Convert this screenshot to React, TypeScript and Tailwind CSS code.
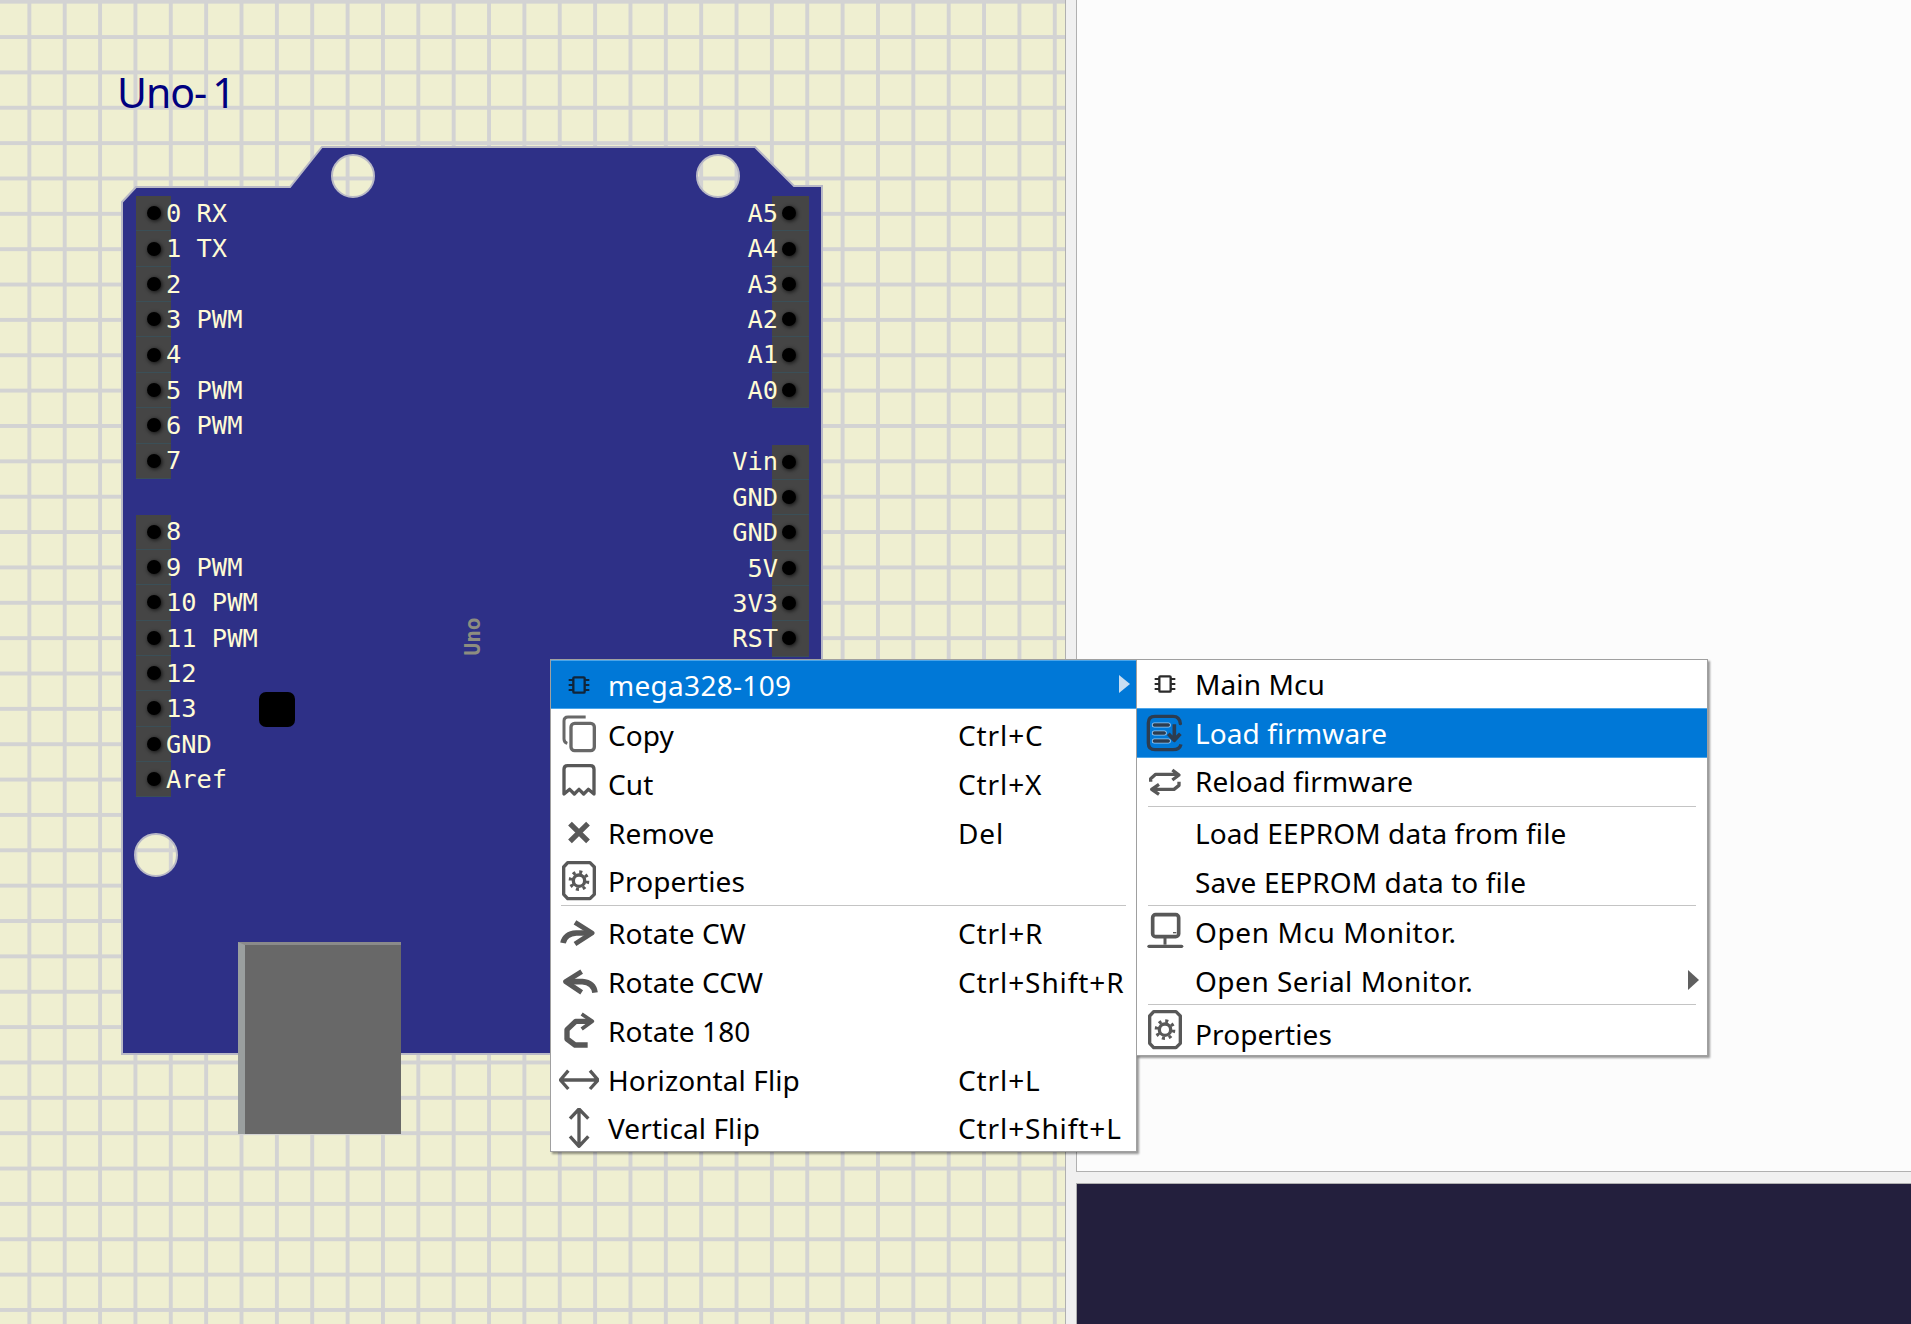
import type { ReactNode } from 'react'

const INK = '#585858'

function Glyph({ children, className = '' }: { children: ReactNode; className?: string }) {
  return (
    <svg viewBox="0 0 120 120" fill="none" strokeLinejoin="round" className={`h-[40px] w-[40px] shrink-0 ${className}`}>
      {children}
    </svg>
  )
}

function ChipIcon({ color }: { color: string }) {
  return (
    <Glyph>
      <rect x="43" y="37" width="34" height="46" rx="3" stroke={color} strokeWidth="7" />
      <path d="M29 45H43M29 60H43M29 75H43M77 45H91M77 60H91M77 75H91" stroke={color} strokeWidth="6" />
    </Glyph>
  )
}

function CopyIcon() {
  return (
    <Glyph>
      <rect x="36" y="25" width="70" height="82" rx="11" stroke="#686868" strokeWidth="10" />
      <path d="M80 6H27Q15 6 15 18V72Q15 82 25 85" stroke="#686868" strokeWidth="9" />
    </Glyph>
  )
}

function CutIcon() {
  return (
    <Glyph>
      <path d="M15 90V16Q15 5 26 5H94Q105 5 105 16V90L88 76L74 90L60 76L46 90L32 76Z" stroke={INK} strokeWidth="10" />
    </Glyph>
  )
}

function RemoveIcon() {
  return (
    <Glyph>
      <path d="M33 32L87 85M87 32L33 85" stroke={INK} strokeWidth="16" />
    </Glyph>
  )
}

function GearBoxIcon() {
  return (
    <Glyph>
      <path d="M26 5H93L106 18V100L93 113H26L14 100V18Z" stroke={INK} strokeWidth="10" />
      <circle cx="60" cy="59" r="17" stroke={INK} strokeWidth="10" />
      <circle cx="60" cy="59" r="26" stroke={INK} strokeWidth="10" strokeDasharray="9 11.4" />
    </Glyph>
  )
}

function RotateCwIcon() {
  return (
    <Glyph>
      <path d="M48 28L99 60L48 93" stroke={INK} strokeWidth="15" />
      <path d="M12 90Q18 62 52 60H94" stroke={INK} strokeWidth="17" />
    </Glyph>
  )
}

function RotateCcwIcon() {
  return (
    <Glyph>
      <path d="M68 29L20 59L68 91" stroke={INK} strokeWidth="15" />
      <path d="M108 92Q104 62 70 59H26" stroke={INK} strokeWidth="17" />
    </Glyph>
  )
}

function Rotate180Icon() {
  return (
    <Glyph>
      <path d="M68 9L100 31L68 54" stroke={INK} strokeWidth="11" />
      <path d="M95 31H50L24 56V84L48 102H86" stroke={INK} strokeWidth="16" />
    </Glyph>
  )
}

function FlipHIcon() {
  return (
    <Glyph>
      <path d="M28 32L4 60L28 87M93 32L117 60L93 87M8 60H113" stroke={INK} strokeWidth="10" />
    </Glyph>
  )
}

function FlipVIcon() {
  return (
    <Glyph>
      <path d="M33 32L60 3L88 32M33 85L60 115L88 85M60 6V112" stroke={INK} strokeWidth="10" />
    </Glyph>
  )
}

function LoadFirmwareIcon() {
  return (
    <Glyph>
      <path d="M106 30V32Q104 10 84 10H30Q10 10 10 30V90Q10 110 30 110H84Q104 110 108 94" stroke="#2c3c50" strokeWidth="10" />
      <path d="M28 36H70M28 60H58M28 84H70" stroke="#9cc8ee" strokeWidth="15" strokeLinecap="round" />
      <path d="M28 36H70M28 60H58M28 84H70" stroke="#2c3c50" strokeWidth="10" strokeLinecap="round" />
      <path d="M88 34V78M70 62L88 82L106 62" stroke="#2c3c50" strokeWidth="11" />
    </Glyph>
  )
}

function ReloadIcon() {
  return (
    <Glyph>
      <path d="M17 59V50L32 37H98M82 24L102 39L82 54" stroke={INK} strokeWidth="10" />
      <path d="M102 59V70L87 82H22M42 67L20 82L42 97" stroke={INK} strokeWidth="10" />
    </Glyph>
  )
}

function MonitorIcon() {
  return (
    <Glyph>
      <rect x="23" y="8" width="78" height="66" rx="9" stroke={INK} strokeWidth="11" />
      <path d="M84 62H94" stroke={INK} strokeWidth="4" />
      <path d="M60 75V98" stroke={INK} strokeWidth="9" />
      <path d="M12 103H110" stroke={INK} strokeWidth="10" strokeLinecap="round" />
    </Glyph>
  )
}

function Separator({ inset }: { inset: string }) {
  return <div className={`h-px shrink-0 bg-[#c4c4c4] ${inset}`} />
}

function MainMenuRow({
  icon,
  label,
  shortcut,
  className = 'h-[49px]',
}: {
  icon: ReactNode
  label: string
  shortcut?: string
  className?: string
}) {
  return (
    <div className={`flex items-center ${className}`}>
      <div className="ml-[8px] w-[49px]">{icon}</div>
      <span className="w-[350px] shrink-0">{label}</span>
      {shortcut && <span className="tracking-[0.9px]">{shortcut}</span>}
    </div>
  )
}

function SubMenuRow({
  icon,
  label,
  className = 'h-[49px]',
  labelClass = '',
  children,
}: {
  icon?: ReactNode
  label: string
  className?: string
  labelClass?: string
  children?: ReactNode
}) {
  return (
    <div className={`relative flex items-center ${className}`}>
      <div className="ml-[8px] h-[40px] w-[50px]">{icon}</div>
      <span className={`relative ${labelClass}`}>{label}</span>
      {children}
    </div>
  )
}

function ContextMenus() {
  const menuBox =
    'absolute flex flex-col border border-[#a0a0a0] bg-white text-black shadow-[2px_2px_2px_rgba(0,0,0,0.4)]'
  const active = 'border-y border-[#4aa5ea] bg-[#0078d7] text-white'

  return (
    <div className="font-['Noto_Sans',sans-serif] text-[28px] tracking-[0.1px]">
      <div className={`${menuBox} left-[550px] top-[659px] z-10 h-[493px] w-[587px]`}>
        <div className={`relative flex h-[49px] items-center ${active}`}>
          <div className="ml-[8px] w-[49px]">
            <ChipIcon color="#10253a" />
          </div>
          <span className="tracking-[0.3px]">mega328-109</span>
          <div className="absolute right-[6px] top-[14px] h-0 w-0 border-y-[9px] border-l-[11px] border-y-transparent border-l-[#c8def2]" />
        </div>
        <div className="h-px shrink-0" />
        <MainMenuRow icon={<CopyIcon />} label="Copy" shortcut="Ctrl+C" />
        <MainMenuRow icon={<CutIcon />} label="Cut" shortcut="Ctrl+X" />
        <MainMenuRow icon={<RemoveIcon />} label="Remove" shortcut="Del" />
        <MainMenuRow icon={<GearBoxIcon />} label="Properties" className="h-[48px]" />
        <Separator inset="mx-[10px]" />
        <div className="h-[2px] shrink-0" />
        <MainMenuRow icon={<RotateCwIcon />} label="Rotate CW" shortcut="Ctrl+R" />
        <MainMenuRow icon={<RotateCcwIcon />} label="Rotate CCW" shortcut="Ctrl+Shift+R" />
        <MainMenuRow icon={<Rotate180Icon />} label="Rotate 180" />
        <MainMenuRow icon={<FlipHIcon />} label="Horizontal Flip" shortcut="Ctrl+L" />
        <MainMenuRow icon={<FlipVIcon />} label="Vertical Flip" shortcut="Ctrl+Shift+L" className="h-[47px]" />
      </div>

      <div className={`${menuBox} left-[1136px] top-[659px] z-20 h-[397px] w-[572px]`}>
        <SubMenuRow icon={<ChipIcon color="#2b2b2b" />} label="Main Mcu" className="h-[48px]" />
        <SubMenuRow icon={<LoadFirmwareIcon />} label="Load firmware" className={`h-[50px] ${active}`} />
        <SubMenuRow icon={<ReloadIcon />} label="Reload firmware" labelClass="-top-px" className="h-[48px]" />
        <Separator inset="mx-[11px]" />
        <div className="h-[2px] shrink-0" />
        <SubMenuRow label="Load EEPROM data from file" labelClass="-top-px" />
        <SubMenuRow label="Save EEPROM data to file" className="h-[47px]" />
        <Separator inset="mx-[11px]" />
        <div className="h-[2px] shrink-0" />
        <SubMenuRow
          icon={<MonitorIcon />}
          label="Open Mcu Monitor."
          labelClass="tracking-[0.6px]"
          className="h-[48px]"
        />
        <SubMenuRow label="Open Serial Monitor." labelClass="top-px tracking-[0.5px]" className="h-[48px]">
          <div className="absolute right-[8px] top-[14px] h-0 w-0 border-y-[10px] border-l-[11px] border-y-transparent border-l-[#5f5f5f]" />
        </SubMenuRow>
        <Separator inset="mx-[11px]" />
        <div className="h-[2px] shrink-0" />
        <SubMenuRow
          icon={<GearBoxIcon />}
          label="Properties"
          labelClass="top-[4px]"
          className="h-[46px]"
        />
      </div>
    </div>
  )
}

function PinRow({ side, label }: { side: 'left' | 'right'; label: string }) {
  const hole = (
    <div
      className={`flex h-full shrink-0 items-center justify-center border-b border-[#3b4f57] bg-[#454545] ${
        side === 'left' ? 'w-[35px]' : 'w-[37px] pr-[3px]'
      }`}
    >
      <div className="h-[14px] w-[14px] rounded-full bg-black shadow-[1px_1px_4px_rgba(0,0,0,0.8)]" />
    </div>
  )
  return (
    <div className={`flex h-[35.37px] items-center ${side === 'right' ? 'justify-end' : ''}`}>
      {side === 'left' && hole}
      <span className={`relative z-10 whitespace-pre ${side === 'left' ? '-ml-[5px]' : '-mr-[6px]'}`}>{label}</span>
      {side === 'right' && hole}
    </div>
  )
}

function PinStrip({ side, labels, className }: { side: 'left' | 'right'; labels: string[]; className: string }) {
  return (
    <div className={`absolute flex flex-col ${className}`}>
      {labels.map((label, i) => (
        <PinRow key={i} side={side} label={label} />
      ))}
    </div>
  )
}

function Board() {
  return (
    <div className="font-['DejaVu_Sans_Mono',monospace] text-[25.4px] leading-none text-[#fffbd5]">
      <svg viewBox="0 0 1066 1324" className="absolute left-0 top-0 h-[1324px] w-[1066px] blur-[0.6px]">
        <path
          fillRule="evenodd"
          fill="#2e3087"
          stroke="#b9b9c6"
          strokeWidth="2"
          d="M122 202L136 187H290L322 147H755L794 186H822V1054H122ZM332 176a21 21 0 1 0 42 0a21 21 0 1 0 -42 0ZM697 176a21 21 0 1 0 42 0a21 21 0 1 0 -42 0ZM135 855a21 21 0 1 0 42 0a21 21 0 1 0 -42 0Z"
        />
      </svg>

      <PinStrip
        side="left"
        className="left-[136px] top-[196px]"
        labels={['0 RX', '1 TX', '2', '3 PWM', '4', '5 PWM', '6 PWM', '7']}
      />
      <PinStrip
        side="left"
        className="left-[136px] top-[514.5px]"
        labels={['8', '9 PWM', '10 PWM', '11 PWM', '12', '13', 'GND', 'Aref']}
      />
      <PinStrip
        side="right"
        className="right-[256px] top-[196px]"
        labels={['A5', 'A4', 'A3', 'A2', 'A1', 'A0']}
      />
      <PinStrip
        side="right"
        className="right-[256px] top-[444.5px]"
        labels={['Vin', 'GND', 'GND', '5V', '3V3', 'RST']}
      />

      <span className="absolute left-[455px] top-[626px] -rotate-90 text-[21px] font-bold text-[#8d8d80]">Uno</span>
      <div className="absolute left-[259px] top-[692px] h-[35px] w-[36px] rounded-[7px] bg-black" />

      <div className="absolute left-[238px] top-[942px] h-[192px] w-[163px] border-t-[3px] border-l-[7px] border-t-[#8a8a8a] border-l-[#9a9f9f] bg-[#686868]" />

      <span className="absolute left-[117px] top-[72px] font-['Noto_Sans',sans-serif] text-[41px] leading-none tracking-[-1px] text-[#000080]">
        Uno-<span className="ml-[6px]">1</span>
      </span>
    </div>
  )
}

export default function App() {
  return (
    <div className="relative flex h-[1324px] w-[1911px] overflow-hidden bg-[#f0f0f0]">
      <div className="relative h-full w-[1066px] shrink-0 border-r border-[#b0b0b0] bg-[#efefd1] bg-[linear-gradient(to_right,#d3d3d3_4px,transparent_4px),linear-gradient(to_bottom,#d3d3d3_4px,transparent_4px)] bg-[size:35.37px_35.37px] bg-[position:27.4px_-0.3px]">
        <Board />
      </div>
      <div className="ml-[10px] flex flex-1 flex-col">
        <div className="h-[1172px] border-b border-l border-[#b0b0b0] bg-[#fcfcfc]" />
        <div className="mt-[11px] flex-1 border-l border-t border-[#b0b0b0] bg-[#231f3d]" />
      </div>
      <ContextMenus />
    </div>
  )
}
